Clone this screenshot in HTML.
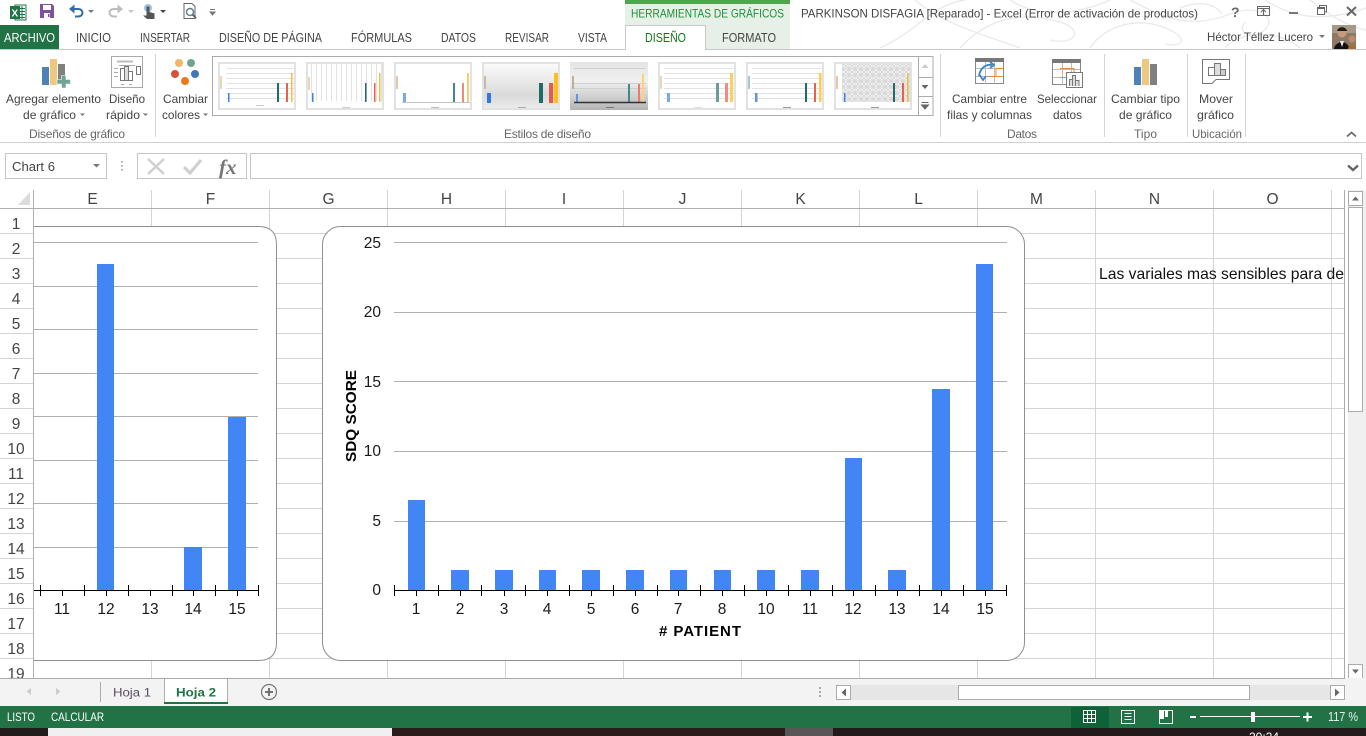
<!DOCTYPE html>
<html lang="es"><head><meta charset="utf-8"><title>Excel</title>
<style>
html,body{margin:0;padding:0;width:1366px;height:736px;overflow:hidden;background:#fff}
svg{display:block;font-family:"Liberation Sans",sans-serif}
.t{font-size:12px;fill:#444}
.g{font-size:12px;fill:#666}
.tab{font-size:12px;fill:#444}
.h{font-size:15.5px;fill:#444;text-anchor:middle}
.c{font-size:15.5px;fill:#1a1a1a;text-anchor:middle}
.y{font-size:15.5px;fill:#1a1a1a;text-anchor:end}
.gl{stroke:#d4d4d4;stroke-width:1}
.cg{stroke:#b0b0b0;stroke-width:1}
.tk{stroke:#000;stroke-width:1}
.bar{fill:#4285f4}
.sep{stroke:#d4d4d4;stroke-width:1}
.ar{fill:#777}
</style></head><body>
<svg width="1366" height="736" viewBox="0 0 1366 736" xmlns="http://www.w3.org/2000/svg">
<defs>
<clipPath id="cellclip"><rect x="1095" y="258" width="249" height="30"/></clipPath>
<clipPath id="tb"><rect x="0" y="728" width="1366" height="8"/></clipPath>
<linearGradient id="th4" x1="0" y1="0" x2="0" y2="1"><stop offset="0" stop-color="#fbfbfb"/><stop offset=".7" stop-color="#dadada"/><stop offset="1" stop-color="#ececec"/></linearGradient>
<linearGradient id="th5" x1="0" y1="0" x2="0" y2="1"><stop offset="0" stop-color="#e4e4e4"/><stop offset=".4" stop-color="#f0f0f0"/><stop offset="1" stop-color="#b4b4b4"/></linearGradient>
<pattern id="hatch" width="6" height="6" patternUnits="userSpaceOnUse"><rect width="6" height="6" fill="#fff"/><path d="M0 0L6 6M0 6L6 0M0 3H6M3 0V6" stroke="#d8d8d8" stroke-width="1.200"/></pattern>
<g id="lines"><path d="M226 68.500H294M226 73.500H294M226 78.500H294M226 83.500H294M226 88.500H294M226 93.500H294M226 98.500H294" stroke="#e2e2e2" fill="none"/></g>
<g id="leg"><rect x="220" y="76" width="2" height="13" fill="#e7d7b5"/></g>
</defs>

<!-- title bar swirls -->
<g fill="none" stroke="#e8e8e8" stroke-width="1.200">
<path d="M880 48C920 30 930 5 965 0M915 0C945 25 985 35 1020 48M960 48C985 20 1020 10 1060 22C1085 30 1075 46 1050 40M1010 0C1040 20 1085 12 1110 0M1090 48C1105 25 1140 15 1170 30C1190 40 1180 48 1165 44"/>
<path d="M1130 0C1165 18 1190 30 1230 14C1260 2 1280 20 1262 32C1248 40 1236 30 1246 22M1225 48C1240 30 1280 30 1300 48M1265 0C1290 16 1320 24 1366 8M1310 0C1325 12 1345 26 1366 30M1180 8C1200 0 1215 4 1222 14"/>
</g>

<!-- QAT -->
<rect x="15" y="5" width="11" height="15" fill="#fff" stroke="#217346"/>
<path d="M19 8.500H25M19 11.500H25M19 14.500H25M19 17.500H25M22 6V19" stroke="#217346"/>
<rect x="10" y="6" width="10" height="13" fill="#217346"/>
<text x="11.500" y="16.500" font-size="10" font-weight="bold" fill="#fff">X</text>
<path d="M40 4H52L54 6V18H40Z" fill="#80519f"/><rect x="43" y="5" width="8" height="5" fill="#fff"/><rect x="44" y="13" width="6" height="5" fill="#fff"/><rect x="48" y="14" width="1.500" height="3" fill="#80519f"/>
<path d="M72 9H78C84 9 84 16.500 78 16.500H75" fill="none" stroke="#2f6ea5" stroke-width="2"/><path d="M69 9L74.500 4.500V13.500Z" fill="#2f6ea5"/>
<path d="M88 10H94L91 13Z" fill="#777"/>
<path d="M120 9H114C108 9 108 16.500 114 16.500H117" fill="none" stroke="#bdbdbd" stroke-width="2"/><path d="M123 9L117.500 4.500V13.500Z" fill="#bdbdbd"/>
<path d="M128 10H134L131 13Z" fill="#c4c4c4"/>
<circle cx="148" cy="8" r="4" fill="#9fc2e4"/>
<path d="M146.500 6.500H149.500V12L154.500 13.500V19H147L143 15.500L146.500 15.500Z" fill="#555"/>
<path d="M160 10H166L163 13Z" fill="#444"/>
<path d="M184 3.500H192L195 6.500V18.500H184Z" fill="#fff" stroke="#666"/>
<circle cx="190" cy="12" r="3.500" fill="#fff" stroke="#5a7d8f" stroke-width="1.400"/><path d="M192.500 14.500L196 18" stroke="#555" stroke-width="1.600"/>
<path d="M210 9.500H215M210 12H215L212.500 15Z" stroke="#777" fill="#777" stroke-width="1"/>

<!-- contextual tab -->
<rect x="625" y="0" width="165" height="50" fill="#e7f0e7"/>
<rect x="625" y="0" width="165" height="4" fill="#4fa64c"/>
<text x="631" y="17.500" font-size="12" fill="#1c8f3a" textLength="153" lengthAdjust="spacingAndGlyphs">HERRAMIENTAS DE GRÁFICOS</text>
<text x="801" y="17.500" class="tab" textLength="397" lengthAdjust="spacingAndGlyphs">PARKINSON DISFAGIA [Reparado] - Excel (Error de activación de productos)</text>

<!-- window controls -->
<text x="1231" y="17" font-size="14" font-weight="bold" fill="#666">?</text>
<rect x="1257.500" y="6.500" width="12" height="9" fill="none" stroke="#666"/><path d="M1257 8.500H1270" stroke="#666"/><path d="M1263.500 15V10M1261 12L1263.500 9.500L1266 12" fill="none" stroke="#666"/>
<rect x="1289" y="12" width="9" height="2" fill="#777"/>
<rect x="1317.500" y="7.500" width="7" height="7" fill="#fff" stroke="#666"/><rect x="1317" y="7" width="8" height="2" fill="#666"/><path d="M1319.500 7.500V5.500H1326.500V12H1324.500" fill="none" stroke="#666"/>
<path d="M1347 7L1356 15.500M1356 7L1347 15.500" stroke="#666" stroke-width="2"/>

<!-- tabs row -->
<rect x="0" y="25" width="59" height="25" fill="#217346"/>
<path d="M0 49.500H625M706 49.500H1366" stroke="#c8c8c8"/>
<path d="M625.500 50V25.500H705.500V50" fill="#fff" stroke="#c8c8c8"/>
<text x="4" y="42" font-size="12.500" fill="#fff" textLength="51" lengthAdjust="spacingAndGlyphs">ARCHIVO</text>
<text x="76" y="42" font-size="12.500" fill="#444" textLength="35" lengthAdjust="spacingAndGlyphs">INICIO</text>
<text x="140" y="42" font-size="12.500" fill="#444" textLength="50" lengthAdjust="spacingAndGlyphs">INSERTAR</text>
<text x="219" y="42" font-size="12.500" fill="#444" textLength="103" lengthAdjust="spacingAndGlyphs">DISEÑO DE PÁGINA</text>
<text x="351" y="42" font-size="12.500" fill="#444" textLength="61" lengthAdjust="spacingAndGlyphs">FÓRMULAS</text>
<text x="441" y="42" font-size="12.500" fill="#444" textLength="35" lengthAdjust="spacingAndGlyphs">DATOS</text>
<text x="505" y="42" font-size="12.500" fill="#444" textLength="44" lengthAdjust="spacingAndGlyphs">REVISAR</text>
<text x="578" y="42" font-size="12.500" fill="#444" textLength="29" lengthAdjust="spacingAndGlyphs">VISTA</text>
<text x="645" y="42" font-size="12.500" fill="#0f7a1e" textLength="41" lengthAdjust="spacingAndGlyphs">DISEÑO</text>
<text x="722" y="42" font-size="12.500" fill="#444" textLength="54" lengthAdjust="spacingAndGlyphs">FORMATO</text>
<text x="1207" y="41" class="tab" textLength="106" lengthAdjust="spacingAndGlyphs">Héctor Téllez Lucero</text>
<path d="M1319 35H1325L1322 38Z" class="ar"/>
<rect x="1332" y="25" width="24" height="24" fill="#8c7a66"/>
<rect x="1332" y="25" width="24" height="8" fill="#a49a88"/>
<circle cx="1342" cy="33" r="4.500" fill="#c49a7a"/><path d="M1337 31C1338 26 1346 26 1347 31Z" fill="#221a14"/>
<path d="M1334 49C1335 40 1349 40 1349 49Z" fill="#121212"/><path d="M1340 41L1342 47L1344 41Z" fill="#eee"/>
<circle cx="1352" cy="39" r="3.500" fill="#c08a6a"/><path d="M1348 49C1349 43 1356 43 1356 49Z" fill="#b06a30"/>

<!-- ribbon separators -->
<path d="M155.500 54V137M940.500 54V137M1104.500 54V137M1187.500 54V137M1245.500 54V137" class="sep"/>
<path d="M0 142.500H1366" stroke="#d0d0d0"/>

<!-- Add chart element icon -->
<rect x="42" y="67" width="7" height="18" fill="#4e81b5"/>
<rect x="50" y="59" width="7" height="26" fill="#eec87f"/>
<rect x="58" y="64" width="7" height="16" fill="#808080"/>
<path d="M61.500 75.500H66V79.500H70.500V84H66V88H61.500V84H57V79.500H61.500Z" fill="#6fa596" stroke="#fff" stroke-width=".6"/>
<!-- Quick layout icon -->
<rect x="111.500" y="56.500" width="31" height="31" fill="#fff" stroke="#aaa"/>
<path d="M117 61.500H133" stroke="#bbb" stroke-width="2"/>
<rect x="120.500" y="68.500" width="4" height="12" fill="#fff" stroke="#777"/><rect x="124.500" y="66.500" width="4" height="14" fill="#ddd" stroke="#777"/><rect x="128.500" y="71.500" width="4" height="9" fill="#fff" stroke="#777"/>
<path d="M114 68.500H118M114 72.500H118M114 76.500H118M121 84.500H124M129 84.500H132M119 65.500H135" stroke="#aaa"/>
<rect x="136.500" y="66.500" width="4" height="8" fill="#fff" stroke="#777"/>
<!-- Colors icon -->
<circle cx="179" cy="63" r="4" fill="#eeb868"/><circle cx="191" cy="63" r="4" fill="#6fa58f"/><circle cx="175" cy="74" r="4" fill="#d9503a"/><circle cx="195" cy="74" r="4" fill="#3f78b4"/><circle cx="185" cy="81" r="4" fill="#e97b1e"/>

<!-- ribbon labels -->
<text x="6" y="103" class="t" textLength="95" lengthAdjust="spacingAndGlyphs">Agregar elemento</text>
<text x="23" y="119" class="t" textLength="53" lengthAdjust="spacingAndGlyphs">de gráfico</text><path d="M80 113.500H85L82.500 116Z" class="ar"/>
<text x="109" y="103" class="t" textLength="36" lengthAdjust="spacingAndGlyphs">Diseño</text>
<text x="106" y="119" class="t" textLength="34" lengthAdjust="spacingAndGlyphs">rápido</text><path d="M143 113.500H148L145.500 116Z" class="ar"/>
<text x="163" y="103" class="t" textLength="45" lengthAdjust="spacingAndGlyphs">Cambiar</text>
<text x="162" y="119" class="t" textLength="38" lengthAdjust="spacingAndGlyphs">colores</text><path d="M203 113.500H208L205.500 116Z" class="ar"/>
<text x="29" y="138" class="g" textLength="96">Diseños de gráfico</text>
<text x="504" y="138" class="g" textLength="87">Estilos de diseño</text>
<text x="952" y="103" class="t" textLength="75" lengthAdjust="spacingAndGlyphs">Cambiar entre</text>
<text x="947" y="119" class="t" textLength="85" lengthAdjust="spacingAndGlyphs">filas y columnas</text>
<text x="1037" y="103" class="t" textLength="60" lengthAdjust="spacingAndGlyphs">Seleccionar</text>
<text x="1053" y="119" class="t" textLength="29" lengthAdjust="spacingAndGlyphs">datos</text>
<text x="1111" y="103" class="t" textLength="69" lengthAdjust="spacingAndGlyphs">Cambiar tipo</text>
<text x="1119" y="119" class="t" textLength="53" lengthAdjust="spacingAndGlyphs">de gráfico</text>
<text x="1199" y="103" class="t" textLength="34" lengthAdjust="spacingAndGlyphs">Mover</text>
<text x="1197" y="119" class="t" textLength="37" lengthAdjust="spacingAndGlyphs">gráfico</text>
<text x="1007" y="138" class="g" textLength="30">Datos</text>
<text x="1134" y="138" class="g" textLength="23">Tipo</text>
<text x="1192" y="138" class="g" textLength="50" lengthAdjust="spacingAndGlyphs">Ubicación</text>
<path d="M1347 136.500L1351.500 132.500L1356 136.500" fill="none" stroke="#666" stroke-width="1.600"/>

<!-- switch row/col icon -->
<rect x="975.500" y="58.500" width="28" height="25" fill="#fff" stroke="#888"/><rect x="975" y="58" width="29" height="4" fill="#777"/>
<path d="M976 68.500H1003M976 76.500H1003M985.500 62V84M994.500 62V84" stroke="#bbb"/>
<path d="M987 76.500H996V68.500H1003M996 76.500H1003" fill="none" stroke="#e8883a"/>
<path d="M979 76C980 68 986 64 992 65M990 62L994 65L990 68M979 74L983 80L986 76" fill="none" stroke="#3f82c4" stroke-width="1.800"/>
<!-- select data icon -->
<rect x="1052.500" y="59.500" width="28" height="25" fill="#fff" stroke="#888"/><rect x="1052" y="59" width="29" height="4" fill="#777"/>
<path d="M1053 69.500H1080M1053 77.500H1080M1062.500 63V85M1071.500 63V85" stroke="#bbb"/>
<path d="M1060 77.500H1068M1060 68.500H1074V72" fill="none" stroke="#e8883a"/>
<rect x="1066.500" y="72.500" width="16" height="15" fill="#fff" stroke="#777"/>
<path d="M1069.500 86V79.500H1072.500V86M1072.500 86V75.500H1075.500V86M1075.500 86V80.500H1079V86" fill="#ddd" stroke="#777"/>
<!-- change type icon -->
<rect x="1134" y="67" width="7" height="18" fill="#4e81b5"/><rect x="1142" y="59" width="7" height="26" fill="#eec87f"/><rect x="1150" y="64" width="7" height="21" fill="#808080"/>
<!-- move chart icon -->
<path d="M1202.500 59.500H1229.500V79.500H1216L1212 83.500H1202.500Z" fill="#fff" stroke="#777"/>
<path d="M1208.500 75.500V67.500H1214.500V75.500Z" fill="#fff" stroke="#777"/><path d="M1214.500 75.500V63.500H1220.500V75.500Z" fill="#ddd" stroke="#777"/><path d="M1220.500 75.500V69.500H1225.500V75.500Z" fill="#ccc" stroke="#777"/>

<!-- gallery -->
<rect x="212.500" y="56.500" width="720.500" height="59" fill="#fff" stroke="#ababab"/>
<path d="M918.500 56V116M918.500 77.500H933M918.500 96.500H933" stroke="#ababab"/>
<path d="M921.500 68H928.500L925 64Z" fill="#ccc"/><path d="M921.500 85H928.500L925 89Z" fill="#666"/><path d="M921.500 102.500H928.500M921.500 105H928.500L925 109Z" stroke="#666" fill="#666" stroke-width="1"/>
<!-- thumb 1 -->
<g>
<rect x="219" y="63" width="76" height="46" fill="#fff" stroke="#e2e2e2" stroke-width="2"/><use href="#lines"/><use href="#leg"/>
<rect x="228" y="93" width="1.500" height="9" fill="#3b82e6"/><rect x="277" y="83" width="2" height="19" fill="#1f6b66"/><rect x="286" y="83" width="2" height="19" fill="#e8604f"/><rect x="291" y="73" width="1.500" height="29" fill="#f0c040"/>
<rect x="256" y="105" width="8" height="1" fill="#ccc"/>
</g>
<!-- thumb 2 -->
<g>
<rect x="307" y="63" width="76" height="46" fill="#fff" stroke="#e2e2e2" stroke-width="2"/>
<path d="M311.500 64V101M316.500 64V101M321.500 64V101M326.500 64V101M331.500 64V101M336.500 64V101M341.500 64V101M346.500 64V101M351.500 64V101M356.500 64V101M361.500 64V101M366.500 64V101M371.500 64V101M376.500 64V101M381.500 64V101" stroke="#e2e2e2"/>
<rect x="308" y="77" width="2" height="13" fill="#e7d7b5"/>
<rect x="312" y="93" width="1.500" height="9" fill="#3b82e6"/><rect x="365" y="83" width="1.500" height="19" fill="#1f6b66"/><rect x="374" y="83" width="1.500" height="19" fill="#e8604f"/><rect x="379" y="73" width="1.500" height="29" fill="#f0c040"/>
<rect x="342" y="107" width="8" height="1" fill="#ccc"/>
</g>
<!-- thumb 3 -->
<g>
<rect x="395" y="63" width="76" height="46" fill="#fff" stroke="#e2e2e2" stroke-width="2"/>
<rect x="396" y="76" width="2" height="13" fill="#e7c7a5"/>
<rect x="403" y="93" width="3" height="9" fill="#7aa8ea"/><path d="M402 102.500H470" stroke="#c4c4c4"/>
<rect x="453" y="83" width="2" height="19" fill="#3f8a86"/><rect x="462" y="83" width="2" height="19" fill="#ee8a7c"/><rect x="467" y="73" width="2" height="29" fill="#f5cf70"/>
<rect x="431" y="107" width="8" height="1" fill="#bbb"/>
</g>
<!-- thumb 4 -->
<g>
<rect x="483" y="63" width="76" height="46" fill="url(#th4)" stroke="#e2e2e2" stroke-width="2"/>
<rect x="484" y="76" width="2" height="13" fill="#c9b8a5"/>
<rect x="487" y="93" width="4" height="10" fill="#2f78e8"/><rect x="539" y="83" width="4" height="20" fill="#1f6b66"/><rect x="549" y="83" width="4" height="20" fill="#e85a48"/><rect x="554" y="73" width="4" height="30" fill="#fcbf1e"/>
<rect x="518" y="107" width="8" height="1" fill="#aaa"/>
</g>
<!-- thumb 5 -->
<g>
<rect x="570" y="62" width="78" height="48" fill="url(#th5)"/>
<path d="M574 68.500H646M574 83.500H646M574 88.500H646" stroke="#cfcfcf"/>
<rect x="572" y="76" width="2" height="13" fill="#bfae96"/>
<rect x="576" y="94" width="2" height="8" fill="#5f93e8"/><rect x="628" y="84" width="2" height="18" fill="#3f8a86"/><rect x="638" y="84" width="2" height="18" fill="#ee7a6c"/><rect x="642" y="74" width="2" height="28" fill="#fbd475"/>
<path d="M574 102.500H646" stroke="#333" stroke-width="1.500"/>
<rect x="606" y="107" width="8" height="1" fill="#777"/>
</g>
<!-- thumb 6 -->
<g>
<rect x="659" y="63" width="76" height="46" fill="#fff" stroke="#e2e2e2" stroke-width="2"/>
<path d="M664 68.500H734M664 73.500H734M664 78.500H734M664 83.500H734M664 88.500H734M664 93.500H734M664 98.500H734" stroke="#e2e2e2"/>
<rect x="660" y="76" width="2" height="13" fill="#e7d7b5"/>
<rect x="667" y="93" width="3" height="9" fill="#7aa8ea"/><rect x="716" y="83" width="3" height="19" fill="#6c9c98"/><rect x="725" y="83" width="3" height="19" fill="#f08c80"/><rect x="730" y="73" width="3" height="29" fill="#fcd060"/>
<rect x="694" y="107" width="8" height="1" fill="#ddd"/>
</g>
<!-- thumb 7 -->
<g>
<rect x="747" y="63" width="76" height="46" fill="#fff" stroke="#e2e2e2" stroke-width="2"/>
<path d="M752 68.500H822M752 73.500H822M752 78.500H822M752 83.500H822M752 88.500H822M752 93.500H822M752 98.500H822" stroke="#e2e2e2"/>
<rect x="748" y="76" width="2" height="13" fill="#9fc9d5"/>
<rect x="755" y="93" width="2.500" height="9" fill="#5f93e8"/><rect x="805" y="83" width="2" height="19" fill="#1f6b66"/><rect x="814" y="83" width="2" height="19" fill="#e8604f"/><rect x="819" y="73" width="2.500" height="29" fill="#fccf50"/>
<rect x="783" y="107" width="8" height="1" fill="#999"/>
</g>
<!-- thumb 8 -->
<g>
<rect x="835" y="63" width="76" height="46" fill="#fff" stroke="#e2e2e2" stroke-width="2"/>
<rect x="842" y="64" width="68" height="38" fill="url(#hatch)"/>
<rect x="836" y="76" width="2" height="13" fill="#e7c7a5"/>
<rect x="844" y="93" width="1.500" height="9" fill="#3b82e6"/><rect x="893" y="83" width="2" height="19" fill="#1f6b66"/><rect x="902" y="83" width="2" height="19" fill="#e8604f"/><rect x="907" y="73" width="1.500" height="29" fill="#f0c040"/>
<rect x="871" y="107" width="8" height="1" fill="#999"/>
</g>

<!-- formula bar -->
<rect x="5.500" y="153.500" width="101" height="25" fill="#fff" stroke="#c6c6c6"/>
<text x="12" y="171" font-size="13" fill="#444" textLength="43" lengthAdjust="spacingAndGlyphs">Chart 6</text>
<path d="M93 164H100L96.500 167.500Z" fill="#777"/>
<path d="M122 161V162.500M122 165V166.500M122 169V170.500" stroke="#999" stroke-width="1.600"/>
<rect x="137.500" y="153.500" width="109" height="25" fill="#fff" stroke="#c6c6c6"/>
<path d="M148 159L164 174M164 159L148 174" stroke="#cfcfcf" stroke-width="2.400"/>
<path d="M184 167L190 173L201 160" fill="none" stroke="#cfcfcf" stroke-width="3"/>
<text x="219" y="174" font-family="Liberation Serif,serif" font-size="21" font-style="italic" font-weight="bold" fill="#777">fx</text>
<rect x="250.500" y="153.500" width="1111" height="25" fill="#fff" stroke="#c6c6c6"/>
<path d="M1348 165.500L1353 170L1358 165.500" fill="none" stroke="#666" stroke-width="2.400"/>

<!-- sheet grid -->
<g class="gl">
<path d="M33 233.500H1345M33 258.500H1345M33 283.500H1345M33 308.500H1345M33 333.500H1345M33 358.500H1345M33 383.500H1345M33 408.500H1345M33 433.500H1345M33 458.500H1345M33 483.500H1345M33 508.500H1345M33 533.500H1345M33 558.500H1345M33 583.500H1345M33 608.500H1345M33 633.500H1345M33 658.500H1345"/>
<path d="M151.500 190V678M269.500 190V678M387.500 190V678M505.500 190V678M623.500 190V678M741.500 190V678M859.500 190V678M977.500 190V678M1095.500 190V678M1213.500 190V678M1331.500 190V678"/>
<path d="M0 233.500H33M0 258.500H33M0 283.500H33M0 308.500H33M0 333.500H33M0 358.500H33M0 383.500H33M0 408.500H33M0 433.500H33M0 458.500H33M0 483.500H33M0 508.500H33M0 533.500H33M0 558.500H33M0 583.500H33M0 608.500H33M0 633.500H33M0 658.500H33"/>
</g>
<path d="M33.500 190V678M0 208.500H1345" class="cg"/>
<path d="M1344.500 190V678" stroke="#ababab"/>
<path d="M30 192V205H18Z" fill="#dcdcdc"/>
<text class="h"><tspan x="92.500" y="204">E</tspan><tspan x="210.500" y="204">F</tspan><tspan x="328.500" y="204">G</tspan><tspan x="446.500" y="204">H</tspan><tspan x="564" y="204">I</tspan><tspan x="682.500" y="204">J</tspan><tspan x="800.500" y="204">K</tspan><tspan x="918.500" y="204">L</tspan><tspan x="1036.500" y="204">M</tspan><tspan x="1154.500" y="204">N</tspan><tspan x="1272.500" y="204">O</tspan></text>
<text class="h"><tspan x="16" y="229">1</tspan><tspan x="16" y="254">2</tspan><tspan x="16" y="279">3</tspan><tspan x="16" y="304">4</tspan><tspan x="16" y="329">5</tspan><tspan x="16" y="354">6</tspan><tspan x="16" y="379">7</tspan><tspan x="16" y="404">8</tspan><tspan x="16" y="429">9</tspan><tspan x="16" y="454">10</tspan><tspan x="16" y="479">11</tspan><tspan x="16" y="504">12</tspan><tspan x="16" y="529">13</tspan><tspan x="16" y="554">14</tspan><tspan x="16" y="579">15</tspan><tspan x="16" y="604">16</tspan><tspan x="16" y="629">17</tspan><tspan x="16" y="654">18</tspan><tspan x="16" y="679">19</tspan></text>
<text x="1099" y="279" font-size="16" fill="#111" clip-path="url(#cellclip)" textLength="245" lengthAdjust="spacingAndGlyphs">Las variales mas sensibles para de</text>

<!-- Chart left -->
<path d="M34 226.500H258.500Q276.500 226.500 276.500 244.500V642.500Q276.500 660.500 258.500 660.500H34Z" fill="#fff"/>
<path d="M34 226.500H258.500Q276.500 226.500 276.500 244.500V642.500Q276.500 660.500 258.500 660.500H34" fill="none" stroke="#8f8f8f"/>
<path d="M34 242.500H258M34 286.500H258M34 329.500H258M34 373.500H258M34 416.500H258M34 460.500H258M34 503.500H258M34 547.500H258" class="cg"/>
<rect class="bar" x="97" y="264" width="17" height="326"/>
<rect class="bar" x="184" y="547" width="18" height="43"/>
<rect class="bar" x="228" y="417" width="18" height="173"/>
<path d="M34 590.500H259M40.500 585V596M62.500 590V596M84.500 585V596M106.500 590V596M128.500 585V596M150.500 590V596M172.500 585V596M193.500 590V596M215.500 585V596M237.500 590V596M258.500 585V596" class="tk"/>
<text class="c"><tspan x="62" y="614">11</tspan><tspan x="106" y="614">12</tspan><tspan x="150" y="614">13</tspan><tspan x="193" y="614">14</tspan><tspan x="237" y="614">15</tspan></text>

<!-- Chart right -->
<rect x="322.500" y="226.500" width="702" height="434" rx="18" ry="18" fill="#fff" stroke="#8f8f8f"/>
<path d="M394 242.500H1007M394 312.500H1007M394 381.500H1007M394 451.500H1007M394 521.500H1007" class="cg"/>
<g class="bar">
<rect x="408" y="500" width="17" height="90"/>
<rect x="451" y="570" width="18" height="20"/>
<rect x="495" y="570" width="18" height="20"/>
<rect x="539" y="570" width="17" height="20"/>
<rect x="582" y="570" width="18" height="20"/>
<rect x="626" y="570" width="18" height="20"/>
<rect x="670" y="570" width="17" height="20"/>
<rect x="714" y="570" width="17" height="20"/>
<rect x="757" y="570" width="18" height="20"/>
<rect x="801" y="570" width="18" height="20"/>
<rect x="845" y="458" width="17" height="132"/>
<rect x="888" y="570" width="18" height="20"/>
<rect x="932" y="389" width="18" height="201"/>
<rect x="976" y="264" width="17" height="326"/>
</g>
<path d="M394 590.500H1007M394.500 585V596M416.500 590V596M438.500 585V596M460.500 590V596M481.500 585V596M504.500 590V596M525.500 585V596M547.500 590V596M569.500 585V596M591.500 590V596M613.500 585V596M635.500 590V596M657.500 585V596M678.500 590V596M700.500 585V596M722.500 590V596M744.500 585V596M766.500 590V596M788.500 585V596M810.500 590V596M832.500 585V596M853.500 590V596M875.500 585V596M897.500 590V596M919.500 585V596M941.500 590V596M963.500 585V596M985.500 590V596M1006.500 585V596" class="tk"/>
<text class="y"><tspan x="381" y="248">25</tspan><tspan x="381" y="317">20</tspan><tspan x="381" y="387">15</tspan><tspan x="381" y="456">10</tspan><tspan x="381" y="526">5</tspan><tspan x="381" y="595">0</tspan></text>
<text class="c"><tspan x="416" y="614">1</tspan><tspan x="460" y="614">2</tspan><tspan x="504" y="614">3</tspan><tspan x="547" y="614">4</tspan><tspan x="591" y="614">5</tspan><tspan x="635" y="614">6</tspan><tspan x="678" y="614">7</tspan><tspan x="722" y="614">8</tspan><tspan x="766" y="614">10</tspan><tspan x="810" y="614">11</tspan><tspan x="853" y="614">12</tspan><tspan x="897" y="614">13</tspan><tspan x="941" y="614">14</tspan><tspan x="985" y="614">15</tspan></text>
<text x="659" y="636" font-size="15" font-weight="bold" fill="#000" textLength="82" lengthAdjust="spacing">#  PATIENT</text>
<text transform="translate(356,462) rotate(-90)" font-size="15" font-weight="bold" fill="#000" textLength="92" lengthAdjust="spacingAndGlyphs">SDQ SCORE</text>

<!-- vertical scrollbar -->
<rect x="1345" y="190" width="21" height="488" fill="#f0f0f0"/>
<rect x="1345" y="190" width="3" height="488" fill="#fff"/>
<rect x="1348.500" y="191.500" width="14" height="14" fill="#fff" stroke="#ababab"/><path d="M1352 200.500H1359L1355.500 196.500Z" fill="#666"/>
<rect x="1348.500" y="207.500" width="14" height="204" fill="#fff" stroke="#ababab"/>
<rect x="1348.500" y="664.500" width="14" height="14" fill="#fff" stroke="#ababab"/><path d="M1352 669.500H1359L1355.500 673.500Z" fill="#666"/>

<!-- tabs / hscroll -->
<rect x="0" y="678" width="1366" height="28" fill="#f3f3f3"/>
<path d="M0 678.500H1345" stroke="#ababab"/>
<path d="M31 688L26.500 691.500L31 695Z" fill="#ccc"/><path d="M56 688L60.500 691.500L56 695Z" fill="#ccc"/>
<path d="M100.500 682V702" stroke="#ababab"/>
<text x="113" y="696.500" font-size="12" fill="#5a4a62" textLength="38" lengthAdjust="spacingAndGlyphs">Hoja 1</text>
<path d="M164.500 702V678.500H227.500V702" fill="#fff" stroke="#ababab"/>
<rect x="164" y="702" width="64" height="2" fill="#217346"/>
<text x="176" y="696.500" font-size="12" font-weight="bold" fill="#217346" textLength="40" lengthAdjust="spacingAndGlyphs">Hoja 2</text>
<circle cx="269" cy="692" r="7.500" fill="#f3f3f3" stroke="#777" stroke-width="1.200"/><path d="M269 688V696M265 692H273" stroke="#666" stroke-width="1.800"/>
<path d="M820 687V689M820 691V693M820 695V697" stroke="#999" stroke-width="1.600"/>
<rect x="836" y="685" width="509" height="15" fill="#e6e6e6"/>
<rect x="836.500" y="685.500" width="14" height="14" fill="#fff" stroke="#ababab"/><path d="M846 688.500V696.500L841.500 692.500Z" fill="#666"/>
<rect x="958.500" y="685.500" width="291" height="14" fill="#fff" stroke="#ababab"/>
<rect x="1330.500" y="685.500" width="14" height="14" fill="#fff" stroke="#ababab"/><path d="M1335 688.500V696.500L1339.500 692.500Z" fill="#666"/>

<!-- status bar -->
<rect x="0" y="706" width="1366" height="22" fill="#217346"/>
<text x="7" y="721" font-size="12" fill="#fff" textLength="28" lengthAdjust="spacingAndGlyphs">LISTO</text>
<text x="51" y="721" font-size="12" fill="#fff" textLength="53" lengthAdjust="spacingAndGlyphs">CALCULAR</text>
<rect x="1071" y="707" width="38" height="21" fill="#0e6238"/>
<path d="M1083.500 710.500H1095.500V722.500H1083.500ZM1083.500 714.500H1095.500M1083.500 718.500H1095.500M1087.500 710.500V722.500M1091.500 710.500V722.500" fill="none" stroke="#fff"/>
<rect x="1121.500" y="710.500" width="13" height="13" fill="none" stroke="#fff"/><path d="M1124.500 713.500H1131.500M1124.500 716.500H1131.500M1124.500 719.500H1131.500" stroke="#fff"/>
<rect x="1159.500" y="710.500" width="13" height="13" fill="none" stroke="#fff"/><path d="M1160 711H1164V719H1160ZM1165 711H1168V717H1165Z" fill="#fff"/>
<rect x="1190" y="716" width="6" height="2" fill="#fff"/>
<rect x="1200" y="716" width="100" height="1" fill="#fff"/>
<rect x="1251" y="712" width="4" height="10" fill="#fff"/>
<path d="M1303 717H1312M1307.500 712.500V721.500" stroke="#fff" stroke-width="2"/>
<text x="1328" y="721" font-size="12.500" fill="#e8f2ec" textLength="30" lengthAdjust="spacingAndGlyphs">117 %</text>

<!-- desktop strip -->
<rect x="0" y="728" width="1366" height="8" fill="#231c1c"/>
<rect x="48" y="728" width="344" height="8" fill="#f0f0f0"/>
<rect x="392" y="728" width="393" height="8" fill="#2c1b1b"/>
<rect x="785" y="728" width="48" height="8" fill="#5a5557"/>
<rect x="833" y="728" width="533" height="8" fill="#241a1c"/>
<text x="1249" y="741" font-size="12" fill="#fff" clip-path="url(#tb)">20:24</text>
</svg>
</body></html>
